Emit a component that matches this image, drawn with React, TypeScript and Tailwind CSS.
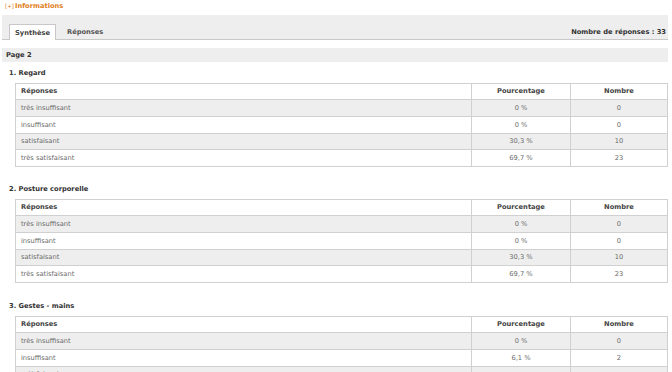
const rows = ["très insuffisant", "insuffisant", "satisfaisant", "très satisfaisant"];

const questions = [
  { title: "1. Regard", gap: "mt-[4px]", values: [["0 %", "0"], ["0 %", "0"], ["30,3 %", "10"], ["69,7 %", "23"]] },
  { title: "2. Posture corporelle", gap: "mt-[15px]", values: [["0 %", "0"], ["0 %", "0"], ["30,3 %", "10"], ["69,7 %", "23"]] },
  { title: "3. Gestes - mains", gap: "mt-[16px]", values: [["0 %", "0"], ["6,1 %", "2"], ["", ""], ["", ""]] },
];

const rowStyles = [
  "h-[17px] bg-[#eeeeee]",
  "h-[17px] bg-white",
  "h-[16px] bg-[#eeeeee]",
  "h-[17px] bg-white",
];

function ResultTable({ values }: { values: string[][] }) {
  return (
    <div className="ml-[13px] border-t border-l border-r border-[#d0d0d0]">
      <div className="flex h-[16px] border-b border-[#d0d0d0] font-bold text-[#444]">
        <div className="flex flex-1 items-center pl-[5px]">Réponses</div>
        <div className="flex w-[99px] items-center justify-center border-l border-[#d0d0d0]">Pourcentage</div>
        <div className="flex w-[97px] items-center justify-center border-l border-[#d0d0d0]">Nombre</div>
      </div>
      {rows.map((label, i) => (
        <div key={label} className={`flex border-b border-[#d0d0d0] text-[#6a6a6a] ${rowStyles[i]}`}>
          <div className="flex flex-1 items-center pl-[5px]">{label}</div>
          <div className="flex w-[99px] items-center justify-center border-l border-[#d0d0d0]">{values[i][0]}</div>
          <div className="flex w-[97px] items-center justify-center border-l border-[#d0d0d0]">{values[i][1]}</div>
        </div>
      ))}
    </div>
  );
}

export default function App() {
  return (
    <div className="h-[372px] w-[672px] overflow-hidden bg-white pl-[2px] pr-[4px] font-['DejaVu_Sans',Verdana,sans-serif] text-[6.7px] leading-none">
      <div className="flex h-[13px] items-center pl-[3px] font-bold text-[#e0801c]">
        <span className="mr-[1px] text-[5.5px] font-normal">[+]</span>
        Informations
      </div>

      <div className="mt-[2px] flex h-[25px] items-end border-b border-[#c8c8c8] bg-[#eeeeee] pl-[7px] pr-[2px]">
        <div className="mb-[-1px] flex h-[16px] w-[47px] items-center justify-center border-l border-r border-t border-[#c8c8c8] bg-white pt-[1px] font-bold text-[#444]">
          Synthèse
        </div>
        <div className="ml-[11px] flex h-[15px] items-center pt-[1px] font-bold text-[#555]">Réponses</div>
        <div className="ml-auto flex h-[15px] items-center pt-[2px] font-bold text-[#333]">Nombre de réponses : 33</div>
      </div>

      <div className="mt-[8px] flex h-[14px] items-center bg-[#eeeeee] pl-[4px] font-bold text-[#333]">Page 2</div>

      {questions.map((q) => (
        <div key={q.title} className={q.gap}>
          <div className="flex h-[14px] items-center pl-[7px] font-bold text-[#333]">{q.title}</div>
          <div className="mt-[3px]">
            <ResultTable values={q.values} />
          </div>
        </div>
      ))}
    </div>
  );
}
